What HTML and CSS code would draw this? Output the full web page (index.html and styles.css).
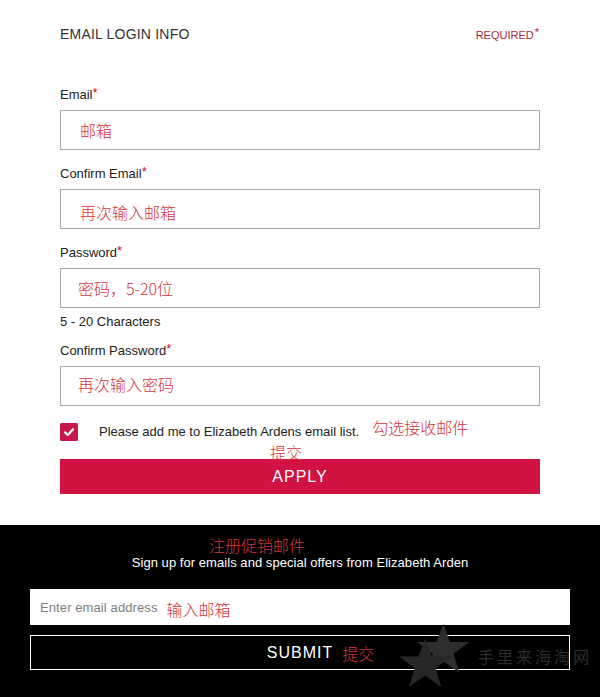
FILE: index.html
```html
<!DOCTYPE html>
<html lang="en">
<head>
<meta charset="utf-8">
<title>Email Login Info</title>
<link rel="stylesheet" href="styles.css">
</head>
<body>
<main class="page">
  <section class="login">
    <div class="login-head">
      <h2 class="login-title">EMAIL LOGIN INFO</h2>
      <span class="required">REQUIRED<span class="star">*</span></span>
    </div>

    <div class="field field-first">
      <label class="field-label">Email<span class="star">*</span></label>
      <div class="field-box"><span class="note">邮箱</span></div>
    </div>

    <div class="field">
      <label class="field-label">Confirm Email<span class="star">*</span></label>
      <div class="field-box field-box-low"><span class="note">再次输入邮箱</span></div>
    </div>

    <div class="field">
      <label class="field-label">Password<span class="star">*</span></label>
      <div class="field-box field-box-tight"><span class="note">密码，5-20位</span></div>
    </div>
    <p class="hint">5 - 20 Characters</p>

    <div class="field field-after-hint">
      <label class="field-label">Confirm Password<span class="star">*</span></label>
      <div class="field-box field-box-tight field-box-high"><span class="note">再次输入密码</span></div>
    </div>

    <div class="optin">
      <span class="checkbox">
        <svg viewBox="0 0 18 18" width="18" height="18" aria-hidden="true">
          <rect x="0" y="0" width="18" height="18" rx="1.5" fill="#c8174a"/>
          <path d="M5 9.4 L7.8 12 L13 6.2" fill="none" stroke="#fff" stroke-width="2.2" stroke-linecap="round" stroke-linejoin="round"/>
        </svg>
      </span>
      <span class="optin-text">Please add me to Elizabeth Ardens email list.</span>
      <span class="note optin-note">勾选接收邮件</span>
    </div>
    <div class="note apply-note">提交</div>
    <button class="apply" type="button">APPLY</button>
  </section>

  <section class="signup">
    <div class="note signup-note">注册促销邮件</div>
    <p class="signup-text">Sign up for emails and special offers from Elizabeth Arden</p>
    <div class="signup-input">
      <span class="placeholder">Enter email address</span>
      <span class="note signup-input-note">输入邮箱</span>
    </div>
    <div class="signup-submit">
      <span></span>
      <span class="submit-label">SUBMIT</span>
      <span class="note submit-note">提交</span>
    </div>

    <div class="watermark" aria-hidden="true">
      <svg class="watermark-stars" viewBox="0 0 80 72" width="72" height="65">
        <polygon fill="#2e2e2e" points="48,0 55.5,20 77,20 59.5,33 66,54 48,41 30,54 36.5,33 19,20 40.5,20"/>
        <polygon fill="#262626" points="28,16 35.5,36 57,36 39.5,49 46,70 28,57 10,70 16.5,49 -1,36 20.5,36"/>
      </svg>
      <span class="watermark-text">手里来海淘网</span>
    </div>
  </section>
</main>
</body>
</html>
```

FILE: styles.css
```css
html, body {
  margin: 0;
  padding: 0;
}

body {
  width: 600px;
  min-height: 697px;
  background: #fff;
  font-family: "Liberation Sans", Arial, "Noto Sans CJK SC", sans-serif;
  color: #333;
}

.page {
  display: flex;
  flex-direction: column;
  min-height: 697px;
}

.note {
  font-family: "Noto Sans CJK SC", "Liberation Sans", sans-serif;
  font-size: 16px;
  font-weight: 300;
  color: #d4343b;
}

/* ---------- login block ---------- */
.login {
  padding: 25px 60px 31px;
}

.login-head {
  display: flex;
  justify-content: space-between;
  align-items: baseline;
  height: 18px;
}

.login-title {
  margin: 0;
  font-size: 14px;
  font-weight: normal;
  line-height: 18px;
  letter-spacing: 0.2px;
  color: #333;
}

.required {
  font-size: 11px;
  line-height: 14px;
  color: #a52a3d;
  margin-right: 1px;
  margin-bottom: 2px;
}

.star {
  color: #c8102e;
  vertical-align: 2px;
  line-height: 0;
}

.required .star {
  vertical-align: 3px;
  margin-left: 1px;
}

.field {
  display: flex;
  flex-direction: column;
  margin-top: 16px;
}

.field-first {
  margin-top: 44px;
}

.field-after-hint {
  margin-top: 13px;
}

.field-label {
  font-size: 13px;
  line-height: 16px;
  height: 16px;
  margin-bottom: 7px;
  color: #222;
}

.field-box {
  box-sizing: border-box;
  height: 40px;
  border: 1px solid #a9a9a9;
  padding-left: 19px;
  display: flex;
  align-items: center;
}

.field-box .note {
  line-height: 20px;
}

.field-box-low .note {
  margin-top: 5px;
}

.field-box-tight {
  padding-left: 17px;
}

.field-box-high .note {
  margin-bottom: 5px;
}

.hint {
  margin: 6px 0 0;
  font-size: 13px;
  line-height: 16px;
  height: 16px;
  color: #222;
}

.optin {
  margin-top: 17px;
  display: flex;
  align-items: center;
  height: 18px;
}

.checkbox {
  display: flex;
  width: 18px;
  height: 18px;
}

.optin-text {
  margin-left: 21px;
  font-size: 13px;
  line-height: 16px;
  color: #222;
}

.optin-note {
  margin-left: 13px;
  margin-bottom: 10px;
  line-height: 18px;
}

.apply-note {
  margin: 2px 0 -2px;
  padding-left: 210px;
  line-height: 18px;
  height: 18px;
}

.apply {
  display: block;
  width: 100%;
  height: 35px;
  border: 0;
  margin: 0;
  padding: 0;
  background: #d11242;
  color: #fff;
  font-family: "Liberation Sans", Arial, sans-serif;
  font-size: 16px;
  letter-spacing: 1px;
  cursor: pointer;
}

/* ---------- signup block ---------- */
.signup {
  position: relative;
  flex: 1;
  background: #000;
  padding: 12px 30px 27px;
}

.signup-note {
  padding-left: 179px;
  line-height: 16px;
  height: 16px;
}

.signup-text {
  margin: 2px 0 0;
  text-align: center;
  color: #fff;
  font-size: 13px;
  line-height: 16px;
  height: 16px;
  letter-spacing: 0.05px;
}

.signup-input {
  margin-top: 18px;
  height: 36px;
  background: #fff;
  display: flex;
  align-items: center;
  padding-left: 10px;
}

.placeholder {
  font-size: 13px;
  color: #7d7d7d;
  letter-spacing: 0.1px;
}

.signup-input-note {
  margin-left: 9px;
  margin-top: 3px;
  line-height: 20px;
}

.signup-submit {
  box-sizing: border-box;
  margin-top: 10px;
  height: 35px;
  border: 1px solid #fff;
  display: grid;
  grid-template-columns: 1fr auto 1fr;
  align-items: center;
  column-gap: 9px;
}

.submit-label {
  color: #fff;
  font-size: 16px;
  line-height: 18px;
  letter-spacing: 1px;
}

.submit-note {
  justify-self: start;
  line-height: 18px;
}

/* ---------- watermark overlay ---------- */
.watermark {
  position: absolute;
  left: 400px;
  top: 99px;
  display: flex;
  align-items: flex-start;
  pointer-events: none;
}

.watermark-stars {
  display: block;
}

.watermark-text {
  margin-left: 6px;
  margin-top: 20px;
  font-family: "Noto Sans CJK SC", sans-serif;
  font-size: 16px;
  letter-spacing: 3px;
  color: #2c2c2c;
}
```
